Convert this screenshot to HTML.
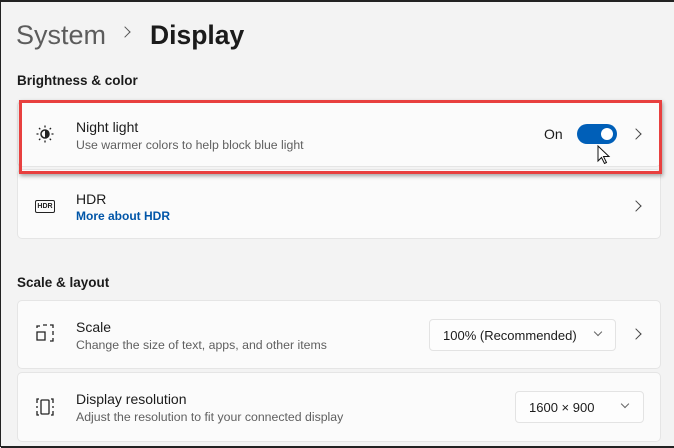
<!DOCTYPE html>
<html><head><style>
*{margin:0;padding:0;box-sizing:border-box}
body{width:674px;height:447px;background:#f3f3f3;font-family:"Liberation Sans",sans-serif;position:relative;overflow:hidden;border:1px solid #222;border-right:none}
.a{position:absolute}
.card{position:absolute;left:16px;width:644px;background:#fbfbfb;border:1px solid #e5e5e5;border-radius:5px}
.t{position:absolute;left:75px;font-size:14px;color:#1b1b1b}
.s{position:absolute;left:75px;font-size:12.3px;color:#5f5f5f}
.chev{position:absolute;left:631px;width:8px;height:8px;border-right:1.3px solid #444;border-top:1.3px solid #444;transform:rotate(45deg)}
.dd{position:absolute;background:#fdfdfd;border:1px solid #e3e3e3;border-radius:4px;font-size:13px;color:#1b1b1b}
.dv{position:absolute;width:6px;height:6px;border-right:1px solid #666;border-bottom:1px solid #666;transform:rotate(45deg)}
</style></head><body>
<div class="a" style="left:15px;top:19px;font-size:27px;color:#5c5c5c">System</div>
<div class="a" style="left:120px;top:27px;width:8px;height:8px;border-right:1.6px solid #555;border-top:1.6px solid #555;transform:rotate(45deg)"></div>
<div class="a" style="left:149px;top:19px;font-size:26.5px;color:#1b1b1b;font-weight:bold">Display</div>
<div class="a" style="left:16px;top:72px;font-size:13.5px;font-weight:bold;color:#1b1b1b">Brightness &amp; color</div>

<div class="card" style="top:100px;height:66px"></div>
<div class="card" style="top:168px;height:70px"></div>
<div class="a" style="left:18px;top:99px;width:643px;height:74px;border:3px solid #e8403f;box-shadow:1px 2px 4px rgba(0,0,0,.35)"></div>

<svg class="a" style="left:34px;top:123px" width="20" height="20" viewBox="0 0 20 20"><circle cx="10" cy="10" r="4" fill="none" stroke="#222" stroke-width="1.5"/><path d="M10 6a4 4 0 0 1 0 8z" fill="#222"/><g stroke="#222" stroke-width="1.3"><path d="M10 1.5v2M10 16.5v2M1.5 10h2M16.5 10h2M4 4l1.3 1.3M14.7 14.7L16 16M4 16l1.3-1.3M14.7 5.3L16 4"/></g></svg>
<div class="t" style="top:118px">Night light</div>
<div class="s" style="top:137px">Use warmer colors to help block blue light</div>
<div class="a" style="left:543px;top:125px;font-size:14px;color:#1b1b1b">On</div>
<div class="a" style="left:576px;top:123px;width:40px;height:20px;border-radius:10px;background:#005fb8"></div>
<div class="a" style="left:600px;top:127px;width:12px;height:12px;border-radius:6px;background:#fff"></div>
<svg class="a" style="left:596px;top:144px" width="14" height="20" viewBox="0 0 14 20"><path d="M1 1v15l3.5-3.5 3 6 2-1-3-6H12z" fill="#fff" stroke="#111" stroke-width="1"/></svg>
<div class="chev" style="top:129px"></div>

<div class="a" style="left:34px;top:199px;width:20px;height:13px;border:1.3px solid #222;border-radius:2px;font-size:7px;font-weight:bold;text-align:center;line-height:11px;color:#222">HDR</div>
<div class="t" style="top:190px">HDR</div>
<div class="a" style="left:75px;top:208px;font-size:12px;font-weight:bold;color:#0055a8">More about HDR</div>
<div class="chev" style="top:201px"></div>

<div class="a" style="left:16px;top:274px;font-size:13.5px;font-weight:bold;color:#1b1b1b">Scale &amp; layout</div>

<div class="card" style="top:299px;height:69px"></div>
<svg class="a" style="left:35px;top:323px" width="18" height="18" viewBox="0 0 18 18" fill="none" stroke="#222" stroke-width="1.3"><path d="M1 4V2h3M7 1h4M14 1h3v3M17 7v4M1 8v8h8V8z"/><path d="M14 17h3v-3"/></svg>
<div class="t" style="top:318px">Scale</div>
<div class="s" style="top:337px">Change the size of text, apps, and other items</div>
<div class="dd" style="left:428px;top:318px;width:187px;height:32px;padding:8px 0 0 13px">100% (Recommended)</div>
<div class="dv" style="left:594px;top:328px"></div>
<div class="chev" style="top:329px"></div>

<div class="card" style="top:371px;height:70px"></div>
<svg class="a" style="left:34px;top:397px" width="20" height="18" viewBox="0 0 20 18" fill="none" stroke="#222" stroke-width="1.3"><rect x="6" y="2" width="8" height="14" rx="1"/><path d="M4 1H2v4M2 13v4h2M16 1h2v4M18 13v4h-2M2 8v2M18 8v2"/></svg>
<div class="t" style="top:390px">Display resolution</div>
<div class="s" style="top:409px">Adjust the resolution to fit your connected display</div>
<div class="dd" style="left:514px;top:390px;width:129px;height:32px;padding:8px 0 0 13px">1600 × 900</div>
<div class="dv" style="left:621px;top:400px"></div>
<div class="a" style="left:0;top:445px;width:674px;height:2px;background:#222"></div>
<div class="a" style="left:0;top:0;width:674px;height:1px;background:#222"></div>
</body></html>
